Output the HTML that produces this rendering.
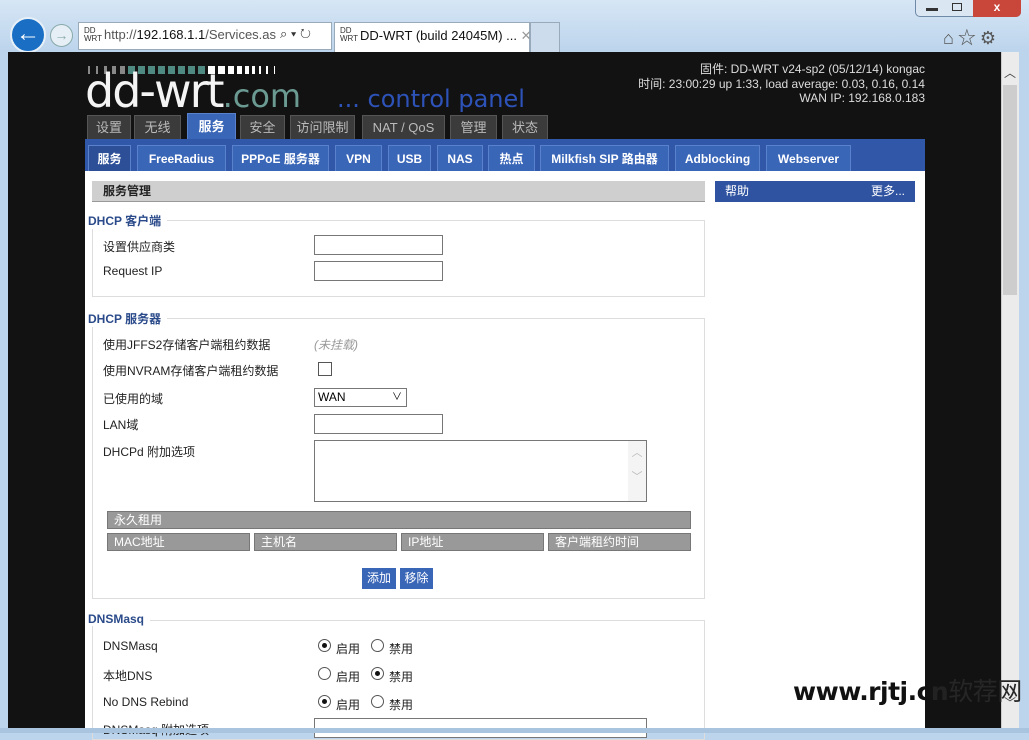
<!DOCTYPE html>
<html><head><meta charset="utf-8"><style>
*{margin:0;padding:0;box-sizing:border-box}
body{width:1029px;height:733px;overflow:hidden;background:#bcd4ec;font-family:"Liberation Sans","Noto Sans CJK SC",sans-serif;font-size:12px;position:relative}
.a{position:absolute}
.tt{background:#3b3b3b;color:#bbb;font-size:13px;text-align:center;line-height:24px;border:1px solid #555;border-bottom:none}
.st{background:#3a66b8;color:#fff;font-weight:bold;font-size:12px;text-align:center;line-height:26px;border:1px solid #5a82cc;border-bottom:none}
.lab{color:#222;font-size:12px}
.inp{border:1px solid #777;background:#fff;height:20px}
.fs{border:1px solid #ddd}
.lg{color:#2a4a8a;font-weight:bold;font-size:12px;background:#fff;padding-right:6px}
.gh{background:#999;color:#fff;font-size:12px;line-height:17px;padding-left:6px;border:1px solid #777}
.rad{width:13px;height:13px;border:1px solid #555;border-radius:50%;background:#fff}
.rad.on::after{content:"";position:absolute;left:3px;top:3px;width:5px;height:5px;border-radius:50%;background:#111}
</style></head><body>
<div class="a" style="left:0;top:0;width:1029px;height:52px;background:linear-gradient(#d6e6f5,#bcd4ec)"></div>
<div class="a" style="left:915px;top:0;width:106px;height:17px;border:1px solid #6f8aa8;border-top:none;border-radius:0 0 5px 5px;background:#dbe6f3"></div>
<div class="a" style="left:973px;top:0;width:48px;height:17px;background:#c9463b;border-radius:0 0 5px 0;color:#fff;text-align:center;font-weight:bold;line-height:15px">x</div>
<div class="a" style="left:926px;top:8px;width:12px;height:3px;background:#333"></div>
<div class="a" style="left:952px;top:3px;width:10px;height:8px;border:1px solid #333"></div>
<div class="a" style="left:10px;top:17px;width:36px;height:36px;border-radius:50%;background:#1a6fc4;border:2px solid #e8f0f8;color:#fff;font-size:24px;line-height:30px;text-align:center;font-weight:bold">←</div>
<div class="a" style="left:50px;top:24px;width:23px;height:23px;border-radius:50%;border:1px solid #8aa;background:#e6eef6;color:#8aa;font-size:14px;line-height:20px;text-align:center">→</div>
<div class="a" style="left:78px;top:22px;width:254px;height:28px;background:#fff;border:1px solid #9ab"></div>
<div class="a" style="left:84px;top:27px;font-size:8px;line-height:8px;color:#333">DD<br>WRT</div>
<div class="a" style="left:104px;top:27px;font-size:13px;color:#555">http://<span style="color:#111">192.168.1.1</span>/Services.as</div>
<div class="a" style="left:280px;top:26px;font-size:13px;color:#333">⌕ ▾ ↻</div>
<div class="a" style="left:334px;top:22px;width:196px;height:30px;background:#fff;border:1px solid #9ab;border-bottom:none"></div>
<div class="a" style="left:340px;top:27px;font-size:8px;line-height:8px;color:#333">DD<br>WRT</div>
<div class="a" style="left:360px;top:28px;font-size:13px;color:#111">DD-WRT (build 24045M) ... <span style="color:#999">✕</span></div>
<div class="a" style="left:530px;top:22px;width:30px;height:30px;background:#cddcec;border:1px solid #9ab;border-bottom:none"></div>
<div class="a" style="left:943px;top:24px;font-size:18px;color:#555;letter-spacing:4px">⌂☆⚙</div>
<div class="a" style="left:8px;top:52px;width:993px;height:676px;background:#121212"></div>
<div class="a" style="left:1001px;top:52px;width:18px;height:676px;background:#ebebeb;border-left:1px solid #ccc"></div>
<div class="a" style="left:1003px;top:85px;width:14px;height:210px;background:#cdcdcd"></div>
<div class="a" style="left:1004px;top:64px;color:#444;font-size:12px">︿</div>
<div class="a" style="left:1004px;top:694px;color:#444;font-size:12px">﹀</div>
<svg class="a" style="left:88px;top:65px" width="200" height="10">
<g fill="#888"><rect x="0" y="1" width="2" height="8"/><rect x="8" y="1" width="2" height="8"/><rect x="16" y="1" width="3" height="8"/><rect x="24" y="1" width="4" height="8"/><rect x="32" y="1" width="5" height="8"/></g>
<g fill="#4e8a82"><rect x="40" y="1" width="7" height="8"/><rect x="50" y="1" width="7" height="8"/><rect x="60" y="1" width="7" height="8"/><rect x="70" y="1" width="7" height="8"/><rect x="80" y="1" width="7" height="8"/><rect x="90" y="1" width="7" height="8"/><rect x="100" y="1" width="7" height="8"/><rect x="110" y="1" width="7" height="8"/></g>
<g fill="#fff"><rect x="120" y="1" width="7" height="8"/><rect x="130" y="1" width="7" height="8"/><rect x="140" y="1" width="6" height="8"/><rect x="149" y="1" width="5" height="8"/><rect x="157" y="1" width="4" height="8"/><rect x="164" y="1" width="3" height="8"/><rect x="171" y="1" width="2" height="8"/><rect x="178" y="1" width="2" height="8"/><rect x="186" y="1" width="1" height="8"/></g>
</svg>
<div class="a" style="left:85px;top:66px;font-size:46px;color:#f4f4f4;letter-spacing:-2px;font-family:'DejaVu Sans',sans-serif;line-height:50px">dd-wrt<span style="color:#6a9a92;font-size:32px;letter-spacing:0">.com</span></div>
<div class="a" style="left:337px;top:85px;font-size:24px;color:#2d52b8;font-family:'DejaVu Sans',sans-serif;line-height:28px">... control panel</div>
<div class="a" style="right:104px;top:62px;color:#ddd;font-size:12px;text-align:right;line-height:14.5px">固件: DD-WRT v24-sp2 (05/12/14) kongac<br>时间: 23:00:29 up 1:33, load average: 0.03, 0.16, 0.14<br>WAN IP: 192.168.0.183</div>
<div class="a tt" style="left:87px;top:115px;width:44px">设置</div>
<div class="a tt" style="left:134px;top:115px;width:47px">无线</div>
<div class="a tt" style="left:187px;top:113px;width:49px;background:#3a66b8;color:#fff;font-weight:bold;line-height:26px;border-color:#5a82cc">服务</div>
<div class="a tt" style="left:240px;top:115px;width:45px">安全</div>
<div class="a tt" style="left:290px;top:115px;width:65px">访问限制</div>
<div class="a tt" style="left:362px;top:115px;width:83px">NAT / QoS</div>
<div class="a tt" style="left:450px;top:115px;width:47px">管理</div>
<div class="a tt" style="left:502px;top:115px;width:46px">状态</div>
<div class="a" style="left:85px;top:139px;width:840px;height:32px;background:#3057a8"></div>
<div class="a st" style="left:88px;top:145px;width:43px;background:#2c4f98">服务</div>
<div class="a st" style="left:137px;top:145px;width:89px">FreeRadius</div>
<div class="a st" style="left:232px;top:145px;width:97px">PPPoE 服务器</div>
<div class="a st" style="left:335px;top:145px;width:47px">VPN</div>
<div class="a st" style="left:388px;top:145px;width:43px">USB</div>
<div class="a st" style="left:437px;top:145px;width:46px">NAS</div>
<div class="a st" style="left:488px;top:145px;width:47px">热点</div>
<div class="a st" style="left:540px;top:145px;width:129px">Milkfish SIP 路由器</div>
<div class="a st" style="left:675px;top:145px;width:85px">Adblocking</div>
<div class="a st" style="left:766px;top:145px;width:85px">Webserver</div>
<div class="a" style="left:85px;top:171px;width:840px;height:557px;background:#fff"></div>
<div class="a" style="left:92px;top:181px;width:613px;height:21px;background:#cfcfcf;border-bottom:1px solid #999;font-weight:bold;color:#222;line-height:20px;padding-left:11px;font-size:12px">服务管理</div>
<div class="a" style="left:715px;top:181px;width:200px;height:21px;background:#2f53a0;color:#fff;line-height:20px;padding:0 10px;font-size:12px">帮助<span style="float:right">更多...</span></div>
<div class="a fs" style="left:92px;top:220px;width:613px;height:77px"></div>
<div class="a lg" style="left:88px;top:212px">DHCP 客户端</div>
<div class="a lab" style="left:103px;top:238px">设置供应商类</div>
<div class="a inp" style="left:314px;top:235px;width:129px"></div>
<div class="a lab" style="left:103px;top:264px">Request IP</div>
<div class="a inp" style="left:314px;top:261px;width:129px"></div>
<div class="a fs" style="left:92px;top:318px;width:613px;height:281px"></div>
<div class="a lg" style="left:88px;top:310px">DHCP 服务器</div>
<div class="a lab" style="left:103px;top:336px">使用JFFS2存储客户端租约数据</div>
<div class="a" style="left:314px;top:336px;color:#999;font-style:italic">(未挂载)</div>
<div class="a lab" style="left:103px;top:362px">使用NVRAM存储客户端租约数据</div>
<div class="a" style="left:318px;top:362px;width:14px;height:14px;border:1px solid #555"></div>
<div class="a lab" style="left:103px;top:390px">已使用的域</div>
<div class="a inp" style="left:314px;top:388px;width:93px;height:19px;line-height:17px;padding-left:3px;font-size:12px">WAN<span style="position:absolute;right:4px;font-size:10px">∨</span></div>
<div class="a lab" style="left:103px;top:416px">LAN域</div>
<div class="a inp" style="left:314px;top:414px;width:129px"></div>
<div class="a lab" style="left:103px;top:443px">DHCPd 附加选项</div>
<div class="a" style="left:314px;top:440px;width:333px;height:62px;border:1px solid #777"></div>
<div class="a" style="left:628px;top:441px;width:18px;height:60px;background:#f4f4f4;color:#bbb;font-size:11px;text-align:center;line-height:24px">︿<br>﹀</div>
<div class="a gh" style="left:107px;top:511px;width:584px;height:18px">永久租用</div>
<div class="a gh" style="left:107px;top:533px;width:143px;height:18px">MAC地址</div>
<div class="a gh" style="left:254px;top:533px;width:143px;height:18px">主机名</div>
<div class="a gh" style="left:401px;top:533px;width:143px;height:18px">IP地址</div>
<div class="a gh" style="left:548px;top:533px;width:143px;height:18px">客户端租约时间</div>
<div class="a" style="left:362px;top:568px;width:34px;height:21px;background:#3a66b8;color:#fff;text-align:center;line-height:21px">添加</div>
<div class="a" style="left:400px;top:568px;width:33px;height:21px;background:#3a66b8;color:#fff;text-align:center;line-height:21px">移除</div>
<div class="a fs" style="left:92px;top:620px;width:613px;height:120px"></div>
<div class="a lg" style="left:88px;top:612px">DNSMasq</div>
<div class="a lab" style="left:103px;top:639px">DNSMasq</div>
<div class="a rad on" style="left:318px;top:639px"></div><div class="a lab" style="left:336px;top:640px">启用</div>
<div class="a rad" style="left:371px;top:639px"></div><div class="a lab" style="left:389px;top:640px">禁用</div>
<div class="a lab" style="left:103px;top:667px">本地DNS</div>
<div class="a rad" style="left:318px;top:667px"></div><div class="a lab" style="left:336px;top:668px">启用</div>
<div class="a rad on" style="left:371px;top:667px"></div><div class="a lab" style="left:389px;top:668px">禁用</div>
<div class="a lab" style="left:103px;top:695px">No DNS Rebind</div>
<div class="a rad on" style="left:318px;top:695px"></div><div class="a lab" style="left:336px;top:696px">启用</div>
<div class="a rad" style="left:371px;top:695px"></div><div class="a lab" style="left:389px;top:696px">禁用</div>
<div class="a lab" style="left:103px;top:721px">DNSMasq 附加选项</div>
<div class="a" style="left:314px;top:718px;width:333px;height:20px;border:1px solid #777;background:#fff"></div>
<div class="a" style="left:0;top:728px;width:1029px;height:5px;background:#a9c4df"></div>
<div class="a" style="left:793px;top:672px;font-size:25px;font-weight:bold;color:#111;font-family:'DejaVu Sans','Noto Sans CJK SC',sans-serif;letter-spacing:-0.5px">www.rjtj.c<span style="color:#222">n</span><span style="font-weight:normal;color:#262626">软荐网</span></div>
</body></html>
